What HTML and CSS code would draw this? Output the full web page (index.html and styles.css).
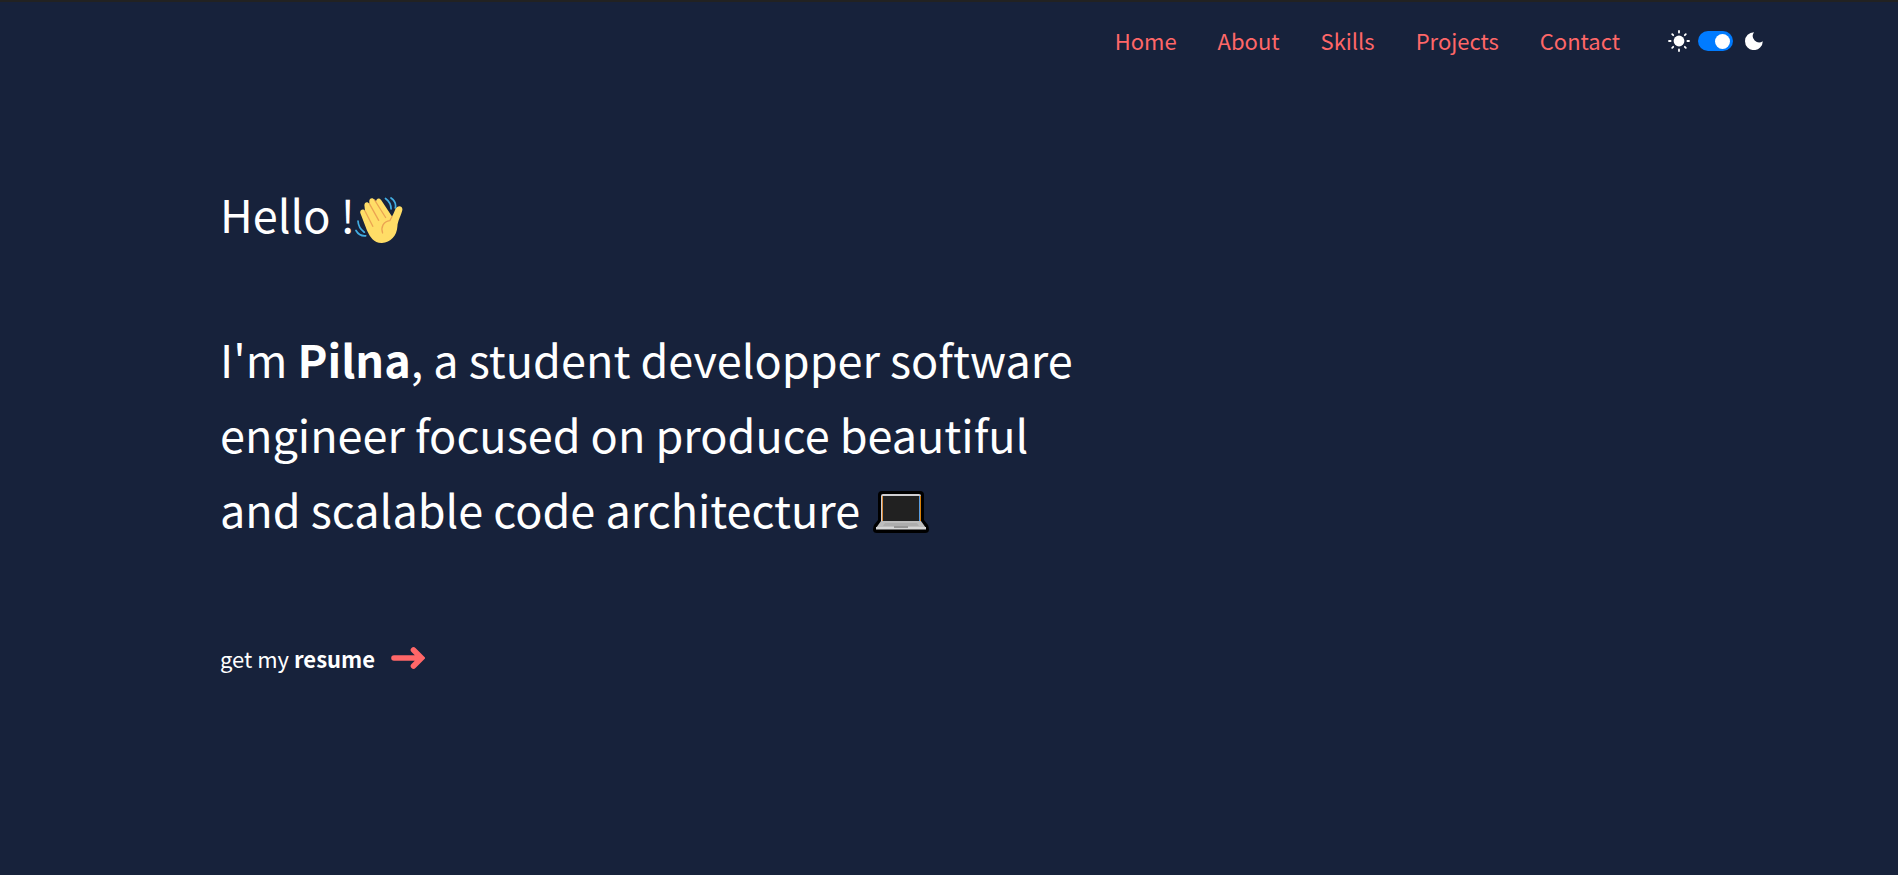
FILE: index.html
```html
<!DOCTYPE html>
<html lang="en">
<head>
<meta charset="utf-8">
<meta name="viewport" content="width=device-width, initial-scale=1">
<title>Pilna</title>
<link rel="stylesheet" href="styles.css">
</head>
<body>
<header class="header">
  <nav class="nav">
    <a class="nav-link" href="#home">Home</a>
    <a class="nav-link" href="#about">About</a>
    <a class="nav-link" href="#skills">Skills</a>
    <a class="nav-link" href="#projects">Projects</a>
    <a class="nav-link" href="#contact">Contact</a>
  </nav>
  <div class="theme">
    <svg class="sun" viewBox="0 0 22 22" aria-hidden="true">
      <circle cx="11" cy="11" r="5.4" fill="#fff"/>
      <path d="M11 1v1.600M11 19.400v1.600M1 11h1.600M19.400 11h1.600M4.200 4.200l1 1M16.800 16.800l1 1M4.200 17.800l1-1M16.800 5.200l1-1" stroke="#fff" stroke-width="1.800" stroke-linecap="round"/>
    </svg>
    <input class="switch" type="checkbox" role="switch" aria-label="Dark mode" checked>
    <svg class="moon" viewBox="0 0 18 18" aria-hidden="true">
      <path d="M9 0.3A6.4 6.4 0 0 0 17.8 9.3A8.9 8.9 0 1 1 9 0.3Z" fill="#fff"/>
    </svg>
  </div>
</header>
<main class="hero" id="home">
  <h1 class="hello">Hello !<svg class="wave" viewBox="0 0 48 48" role="img" aria-label="Waving hand">
    <path d="M5.300 16C4.600 12.800 8.300 11.200 10 14L9.500 9.200C8.700 5.400 12.400 3.600 14.500 6.900L14.300 5C13.800 1.200 17.600-.2 19.600 3L21 5C20.800 1.500 24.200-.2 26.300 3.300L37 19.500C38.900 16.300 39.500 14.300 40.600 11.600C42 8.200 48.300 8 47.300 13.200C46.300 18 42.700 23.600 42.400 29.500C41.900 38.700 35.500 45.600 27 46C19.100 46.300 15.100 40 12 33.500Z" fill="#ffdd67"/>
    <path d="M10 14l7.800 15.300M14.500 6.900l9.200 16.500M19.600 3l11 17.500M37 19.500l-2.200 4.200c-6.400.7-9.200 6.500-7.200 12.300" fill="none" stroke="#eba352" stroke-width="1.300" stroke-linecap="round"/>
    <path d="M30.500 1.500c3.500 2.500 5.500 5.600 5.600 10.500M36 1c3.600 2.600 5.300 6.200 4.300 10M3 24c.2 4.700 2.300 8.300 6.300 11.200M1 33.500c2.300 4 5.500 5.700 9.700 5.300" fill="none" stroke="#42ade2" stroke-width="1.700" stroke-linecap="round"/>
  </svg></h1>
  <p class="intro">I'm <strong>Pilna</strong>, a student developper software engineer focused on produce beautiful and scalable code architecture <svg class="laptop" viewBox="0 0 56 42" role="img" aria-label="Laptop">
    <path d="M9 0H47Q51 0 51 4V29L55 34Q58 42 52 42H4Q-2 42 1 34L5 29V4Q5 0 9 0Z" fill="#000"/>
    <path d="M10 3H46Q48 3 48 5V31H8V5Q8 3 10 3Z" fill="#cfcfd2"/>
    <path d="M9.500 5V30" stroke="#d98a3a"/><path d="M46.500 5V30" stroke="#569be0"/><path d="M47.500 5V30" stroke="#d98008"/>
    <path d="M10 5H46V30H10Z" fill="#212121"/>
    <path d="M8 30H48L53 37H3Z" fill="#bdbdbd"/>
    <path d="M12 32H44L46 35H10Z" fill="#adadad"/>
    <path d="M3 36H53V38.500H3Z" fill="#d6d6d6"/>
    <path d="M21 35H35V37H21Z" fill="#969696"/>
  </svg></p>
  <a class="resume" href="#resume"><span>get my <strong>resume</strong></span>
    <svg class="arrow" viewBox="0 0 34 22" aria-hidden="true"><path d="M3 11H30M22.500 3L30.500 11L22.500 19" fill="none" stroke="#ff6768" stroke-width="5.600" stroke-linecap="round" stroke-linejoin="miter"/></svg>
  </a>
</main>
</body>
</html>
```
FILE: styles.css
```css
* {
  box-sizing: border-box;
}

body {
  margin: 0;
  min-height: 100vh;
  border-top: 2px solid #222;
  background: #17223b;
  color: #fff;
  font-family: "Source Sans Pro", "Noto Sans CJK SC", sans-serif;
}

.header {
  display: flex;
  justify-content: flex-end;
  align-items: center;
  gap: 48px;
  height: 78px;
  padding-right: 135px;
}

.nav {
  display: flex;
  gap: 41px;
  padding-bottom: 2px;
}

.nav-link {
  color: #ff6768;
  font-size: 22px;
  line-height: 32px;
  text-decoration: none;
}

.theme {
  display: flex;
  align-items: center;
  gap: 8px;
}

.sun {
  width: 22px;
  height: 22px;
}

.switch {
  appearance: none;
  display: flex;
  align-items: center;
  justify-content: flex-end;
  width: 35px;
  height: 20px;
  margin: 0 4px 0 0;
  padding: 0 3px;
  border-radius: 10px;
  background: #007bff;
  cursor: pointer;
}

.switch::before {
  content: "";
  width: 15px;
  height: 15px;
  border-radius: 50%;
  background: #fff;
}

.switch:not(:checked) {
  justify-content: flex-start;
}

.moon {
  width: 18px;
  height: 18px;
}

.hero {
  display: flex;
  flex-direction: column;
  align-items: flex-start;
  padding: 96px 40px 60px 220px;
}

.hello,
.intro {
  margin: 0;
  font-size: 45px;
  font-weight: 400;
  line-height: 75px;
}

.intro {
  max-width: 860px;
  margin-top: 70px;
}

.wave {
  width: 48px;
  height: 48px;
  vertical-align: -12px;
}

.laptop {
  width: 56px;
  height: 42px;
  margin-left: 3px;
  vertical-align: -5px;
}

.resume {
  display: flex;
  align-items: center;
  gap: 16px;
  margin-top: 92px;
  color: #fff;
  font-size: 22px;
  line-height: 40px;
  text-decoration: none;
}

.arrow {
  width: 34px;
  height: 22px;
}
```
